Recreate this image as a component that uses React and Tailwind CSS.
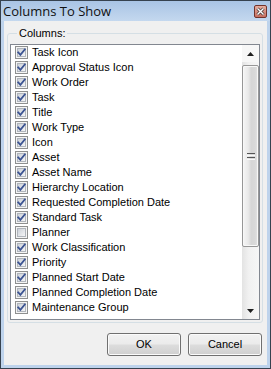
import React from "react";

const items = [
  ["Task Icon", true],
  ["Approval Status Icon", true],
  ["Work Order", true],
  ["Task", true],
  ["Title", true],
  ["Work Type", true],
  ["Icon", true],
  ["Asset", true],
  ["Asset Name", true],
  ["Hierarchy Location", true],
  ["Requested Completion Date", true],
  ["Standard Task", true],
  ["Planner", false],
  ["Work Classification", true],
  ["Priority", true],
  ["Planned Start Date", true],
  ["Planned Completion Date", true],
  ["Maintenance Group", true],
];

function CheckBox({ checked }) {
  return (
    <svg width="13" height="13" viewBox="0 0 13 13" className="shrink-0 block">
      <defs>
        <linearGradient id="cbfill" x1="0" y1="0" x2="1" y2="1">
          <stop offset="0" stopColor="#c9ced6" />
          <stop offset="1" stopColor="#f7f7f8" />
        </linearGradient>
      </defs>
      <rect x="0.5" y="0.5" width="12" height="12" fill="#f4f4f4" stroke="#8e8f8f" />
      <rect x="2.5" y="2.5" width="8" height="8" fill="url(#cbfill)" stroke="#b0b5bc" />
      {checked && (
        <path
          d="M3.2 6.4 L5.4 8.9 L9.8 3.4"
          fill="none"
          stroke="#3b5392"
          strokeWidth="1.8"
          strokeLinecap="square"
        />
      )}
    </svg>
  );
}

function Button({ children }) {
  return (
    <div className="w-[74px] h-[23px] rounded-[3px] border border-[#707070] bg-[linear-gradient(to_bottom,#f2f2f2_0%,#ebebeb_48%,#dddddd_52%,#cfcfcf_100%)] shadow-[inset_0_0_0_1px_#fbfbfb] flex items-center justify-center text-[11px] leading-none text-black">
      {children}
    </div>
  );
}

function Scrollbar() {
  return (
    <div className="w-[17px] shrink-0 flex flex-col bg-[linear-gradient(to_right,#e3e3e3,#f1f1f1_40%,#f6f6f6)]">
      <div className="h-[17px] shrink-0 flex items-center justify-center bg-[#f7f7f7]">
        <svg width="7" height="4" viewBox="0 0 7 4" className="block">
          <path d="M0 4 L3.5 0 L7 4 Z" fill="#1e1e1e" />
        </svg>
      </div>
      <div className="mt-[3px] h-[182px] shrink-0 rounded-[2px] border border-[#979797] bg-[linear-gradient(to_right,#f6f6f6,#e9e9e9_35%,#d6d6d6_55%,#d9d9d9_80%,#e4e4e4)] shadow-[inset_0_0_0_1px_#f8f8f8] flex items-center justify-center">
        <div className="flex flex-col gap-[1px]">
          <div className="w-[8px] h-[1px] bg-[#555]" />
          <div className="w-[8px] h-[1px] bg-[#fafafa]" />
          <div className="w-[8px] h-[1px] bg-[#555]" />
          <div className="w-[8px] h-[1px] bg-[#fafafa]" />
        </div>
      </div>
      <div className="flex-1" />
      <div className="h-[17px] shrink-0 flex items-center justify-center">
        <svg width="7" height="4" viewBox="0 0 7 4" className="block">
          <path d="M0 0 L3.5 4 L7 0 Z" fill="#1e1e1e" />
        </svg>
      </div>
    </div>
  );
}

export default function App() {
  return (
    <div className="w-[271px] h-[369px] border border-[#36424f] bg-[#bed3ec] flex flex-col font-['Liberation_Sans',Arial,sans-serif] text-[11px] text-black overflow-hidden">
      <div className="h-[20px] shrink-0 flex items-center justify-between pl-[2px] pr-[3px] bg-[linear-gradient(to_bottom,#a9c4e5,#c4d8ef)]">
        <span className="text-[13px] leading-none font-['Open_Sans',sans-serif] text-[#111]">
          Columns To Show
        </span>
        <div className="w-[13px] h-[13px] rounded-[2px] border border-[#72332b] bg-[linear-gradient(to_bottom,#e6ad9f,#c76f60)] flex items-center justify-center">
          <svg width="9" height="9" viewBox="0 0 9 9" className="block">
            <path d="M1.5 1.5 L7.5 7.5 M7.5 1.5 L1.5 7.5" stroke="#4a3a38" strokeWidth="3" />
            <path d="M1.5 1.5 L7.5 7.5 M7.5 1.5 L1.5 7.5" stroke="#ffffff" strokeWidth="1.4" />
          </svg>
        </div>
      </div>
      <div className="flex-1 mx-[3px] mb-[3px] bg-[#f0f0f0] flex flex-col">
        <fieldset className="ml-[3px] mt-[6px] w-[256px] border border-[#d5dfe5] rounded-[3px] px-[2px] pb-[2px]">
          <legend className="ml-[7px] px-[2px] leading-[13px]">Columns:</legend>
          <div className="mt-[4px] h-[276px] border border-[#828790] bg-white flex overflow-hidden">
            <div className="flex-1 flex flex-col overflow-hidden">
              {items.map(([label, checked]) => (
                <div key={label} className="h-[15px] shrink-0 flex items-center pl-[4px] gap-[4px] leading-[15px] whitespace-nowrap">
                  <CheckBox checked={checked} />
                  <span>{label}</span>
                </div>
              ))}
            </div>
            <Scrollbar />
          </div>
        </fieldset>
        <div className="mt-[10px] flex justify-end gap-[7px] pr-[5px]">
          <Button>OK</Button>
          <Button>Cancel</Button>
        </div>
      </div>
    </div>
  );
}
